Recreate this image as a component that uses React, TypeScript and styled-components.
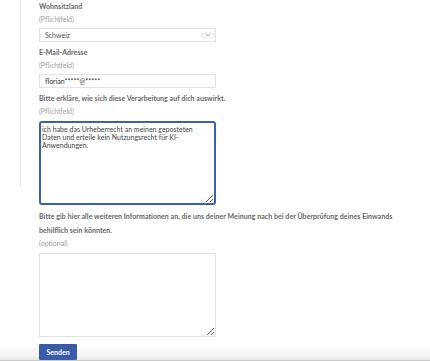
import React from "react";
import styled, { createGlobalStyle } from "styled-components";

const Global = createGlobalStyle`
  html, body { margin: 0; padding: 0; background: #fff; }
  body { font-family: Lato, "Open Sans", Arial, sans-serif; overflow: hidden; }
`;

const Page = styled.div`
  width: 430px;
  height: 361px;
  display: flex;
  flex-direction: column;
  overflow: hidden;
`;

const Body = styled.div`
  display: flex;
  align-items: flex-start;
  padding-left: 20px;
`;

const Rule = styled.div`
  width: 1px;
  height: 186px;
  background: #ececec;
  flex-shrink: 0;
`;

const Form = styled.form`
  margin: -1px 0 0 18px;
  width: 200px;
  display: flex;
  flex-direction: column;
  gap: 3px;
`;

const Field = styled.div`
  display: flex;
  flex-direction: column;
`;

const Label = styled.div<{ $wide?: boolean }>`
  font-size: 7px;
  line-height: 14px;
  font-weight: 700;
  letter-spacing: 0.05px;
  color: #666;
  width: ${(p) => (p.$wide ? "378px" : "auto")};
  white-space: ${(p) => (p.$wide ? "normal" : "nowrap")};
`;

const Hint = styled.div`
  font-size: 7px;
  line-height: 13px;
  color: #a0a0a0;
  margin-bottom: 2px;
`;

const SelectBox = styled.div`
  box-sizing: border-box;
  width: 177px;
  height: 14px;
  border: 1px solid #e2e2e2;
  display: flex;
  align-items: center;
  justify-content: space-between;
  padding: 0 4px 0 5px;
  font-size: 7px;
  color: #555;
`;

const Input = styled.div`
  box-sizing: border-box;
  width: 177px;
  height: 14px;
  border: 1px solid #e2e2e2;
  display: flex;
  align-items: center;
  padding: 0 5px;
  font-size: 7px;
  color: #333;
`;

const Area = styled.textarea<{ $active?: boolean }>`
  box-sizing: border-box;
  width: 177px;
  height: 84px;
  margin: 1px 0 1px;
  padding: 2px 1px;
  font-family: Lato, "Open Sans", Arial, sans-serif;
  font-size: 7px;
  line-height: 8px;
  color: #444;
  border: ${(p) => (p.$active ? "2px solid #3c62ad" : "1px solid #e2e2e2")};
  border-radius: ${(p) => (p.$active ? "3px" : "0")};
  outline: none;
  resize: both;
  background: #fff;
`;

const Footer = styled.div`
  margin-top: 6px;
  flex: 1;
  display: flex;
  align-items: flex-start;
  padding-left: 39px;
  background: linear-gradient(#ffffff 0%, #f4f4f4 70%, #e8e8e8 100%);
  border-bottom: 2px solid #c9c9c9;
  box-sizing: border-box;
`;

const Button = styled.button`
  height: 16px;
  width: 38px;
  padding: 0;
  border: none;
  border-radius: 1px;
  background: #3a5ca8;
  color: #fff;
  font-family: Lato, "Open Sans", Arial, sans-serif;
  font-weight: 700;
  font-size: 7px;
`;

const Chevron = () => (
  <svg width="6" height="4" viewBox="0 0 6 4">
    <path d="M0.5 0.5 L3 3 L5.5 0.5" fill="none" stroke="#999" strokeWidth="0.9" />
  </svg>
);

export default function App() {
  return (
    <Page>
      <Global />
      <Body>
        <Rule />
        <Form>
          <Field>
            <Label>Wohnsitzland</Label>
            <Hint>(Pflichtfeld)</Hint>
            <SelectBox>
              <span>Schweiz</span>
              <Chevron />
            </SelectBox>
          </Field>
          <Field>
            <Label>E-Mail-Adresse</Label>
            <Hint>(Pflichtfeld)</Hint>
            <Input>florian*****@*****</Input>
          </Field>
          <Field>
            <Label>Bitte erkläre, wie sich diese Verarbeitung auf dich auswirkt.</Label>
            <Hint>(Pflichtfeld)</Hint>
            <Area
              $active
              readOnly
              defaultValue={"ich habe das Urheberrecht an meinen geposteten Daten und erteile kein Nutzungsrecht für KI-Anwendungen.\n"}
            />
          </Field>
          <Field>
            <Label $wide>
              Bitte gib hier alle weiteren Informationen an, die uns deiner Meinung nach bei der Überprüfung deines Einwands behilflich sein könnten.
            </Label>
            <Hint>(optional)</Hint>
            <Area readOnly defaultValue="" />
          </Field>
        </Form>
      </Body>
      <Footer>
        <Button type="button">Senden</Button>
      </Footer>
    </Page>
  );
}
